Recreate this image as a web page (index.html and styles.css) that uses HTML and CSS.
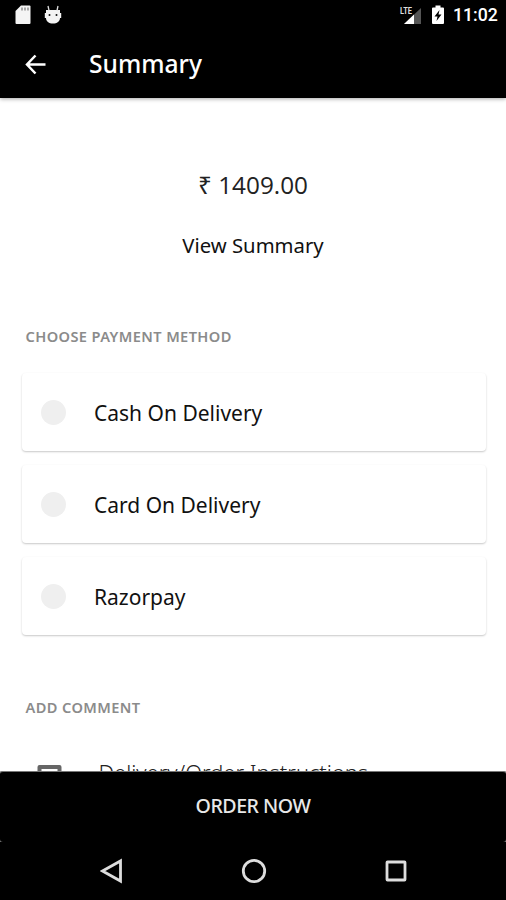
FILE: index.html
```html
<!DOCTYPE html>
<html lang="en">
<head>
<meta charset="utf-8">
<title>Summary</title>
<link rel="stylesheet" href="styles.css">
</head>
<body>
<div class="screen">
  <header class="header">
    <div class="status">
      <svg class="sd" width="16" height="20" viewBox="0 0 16 20"><path fill="#f4f4f4" d="M6 .5h8.500q1 0 1 1v16.500q0 1-1 1H1.500q-1 0-1-1V6z"/><path stroke="#888" stroke-width="1.400" d="M7 2.500v3M10 2.500v3M13 2.500v3"/></svg>
      <svg class="bot" width="18" height="20" viewBox="0 0 18 20"><path fill="#f4f4f4" d="M2 5h14v3h1.200v5H16c0 3.500-3 5.500-7 5.500S2 16.500 2 13H.8V8H2z"/><path stroke="#ddd" stroke-width="1.300" d="M5 5.500 4 1M13 5.500 14 1"/><circle cx="5.500" cy="10" r="1" fill="#111"/><circle cx="12.500" cy="10" r="1" fill="#111"/></svg>
      <span class="spacer"></span>
      <svg class="signal" width="23" height="20" viewBox="0 0 23 20"><path fill="#555" d="M22 3v16H5z"/><path fill="#fff" d="M15 9.600V19H5z"/><text class="lte" x="1" y="9" textLength="12" lengthAdjust="spacingAndGlyphs">LTE</text></svg>
      <svg class="battery" width="12" height="20" viewBox="0 0 12 20"><path fill="#fff" d="M3.500 .5h5v2H11q1 0 1 1v14.500q0 1-1 1H1q-1 0-1-1v-14.500q0-1 1-1h2.500z"/><path fill="#000" d="M7.500 5 2.500 11.500h3L4.500 16l5-6.500h-3z"/></svg>
      <span class="clock">11:02</span>
    </div>
    <div class="appbar">
      <svg class="back" width="22" height="22" viewBox="0 0 22 22" fill="none" stroke="#fff" stroke-width="2.500"><path d="M10.500 2.500 2 11.500l8.500 9M2 11.500h18.500"/></svg>
      <h1 class="title">Summary</h1>
    </div>
  </header>
  <main class="content">
    <div class="amount">₹ 1409.00</div>
    <div class="view">View Summary</div>
    <h2 class="section">CHOOSE PAYMENT METHOD</h2>
    <div class="methods">
      <div class="card"><span class="radio"></span><span class="label">Cash On Delivery</span></div>
      <div class="card"><span class="radio"></span><span class="label">Card On Delivery</span></div>
      <div class="card"><span class="radio"></span><span class="label">Razorpay</span></div>
    </div>
    <h2 class="section comment">ADD COMMENT</h2>
    <div class="field">
      <svg width="26" height="26" viewBox="0 0 26 26"><path fill="none" stroke="#666" stroke-width="4" stroke-linejoin="round" d="M2.500 3h20v16h-14l-6 5z"/></svg>
      <span class="hint">Delivery/Order Instructions</span>
    </div>
  </main>
  <div class="footer"><div class="order">ORDER NOW</div></div>
  <nav class="nav">
    <svg width="24" height="26" viewBox="0 0 24 26"><path d="M2.500 13 20.500 3v20z"/></svg>
    <svg width="26" height="26" viewBox="0 0 26 26"><circle cx="13" cy="13" r="10.700"/></svg>
    <svg width="24" height="26" viewBox="0 0 24 26"><rect x="3" y="4" width="18" height="18" rx=".5"/></svg>
  </nav>
</div>
</body>
</html>
```
FILE: styles.css
```css
* { box-sizing: border-box; }
body { margin: 0; background: #fff; font-family: "Noto Sans", "Open Sans", sans-serif; }
svg { display: block; flex: none; }
.screen { width: 506px; height: 900px; display: flex; flex-direction: column; overflow: hidden; }
.header { height: 98px; flex: none; background: #000; color: #fff; box-shadow: 0 1px 4px rgba(0,0,0,.35); }
.status { height: 30px; display: flex; align-items: center; padding: 0 9px 0 15px; }
.bot { margin-left: 13px; }
.spacer { flex: 1; }
.lte { font: bold 9px Roboto, sans-serif; fill: #ddd; }
.battery { margin-left: 10px; }
.clock { width: 44px; margin-left: 9px; font: 500 17.700px/32px Roboto, sans-serif; white-space: nowrap; }
.appbar { height: 68px; display: flex; align-items: center; padding-left: 25px; }
.title { margin: 0 0 0 42px; font-size: 24.600px; line-height: 34px; font-weight: 500; }
.content { height: 673px; flex: none; overflow: hidden; display: flex; flex-direction: column; }
.amount { margin-top: 70px; text-align: center; font-family: "Open Sans", "Noto Sans", sans-serif; font-size: 24.300px; line-height: 34px; color: #222; }
.view { margin-top: 28px; text-align: center; font-size: 20.300px; line-height: 30px; color: #111; }
.section { margin: 66px 0 0 25.500px; font-size: 14.600px; line-height: 20px; font-weight: 600; letter-spacing: .4px; color: #8b8b8b; white-space: nowrap; }
.methods { display: flex; flex-direction: column; gap: 14px; margin: 27px 20px 0 22px; }
.card { height: 78px; display: flex; align-items: center; padding-left: 19px; border-radius: 4px; box-shadow: 0 1px 2px rgba(0,0,0,.22); }
.radio { width: 25px; height: 25px; border-radius: 50%; background: #efefef; }
.label { margin-left: 28px; padding-top: 2px; font-size: 21px; line-height: 30px; color: #111; white-space: nowrap; }
.comment { margin-top: 62px; }
.field { display: flex; align-items: flex-start; padding: 47px 0 0 37px; }
.hint { margin-left: 35.500px; margin-top: -5px; font-size: 21.900px; line-height: 28px; font-weight: 300; color: #222; white-space: nowrap; }
.footer { height: 71px; flex: none; background: linear-gradient(#aaa 1px, #777 1px); }
.order { height: 71px; background: #000; border-top: 1px solid #777; border-radius: 3px; color: #e8e8e8; text-align: center; font-size: 19.600px; letter-spacing: -.5px; font-weight: 500; line-height: 68px; }
.nav { height: 58px; flex: none; background: #000; display: flex; align-items: center; justify-content: space-between; padding: 0 98px 0 100px; fill: none; stroke: #ddd; stroke-width: 2.800; }
```
